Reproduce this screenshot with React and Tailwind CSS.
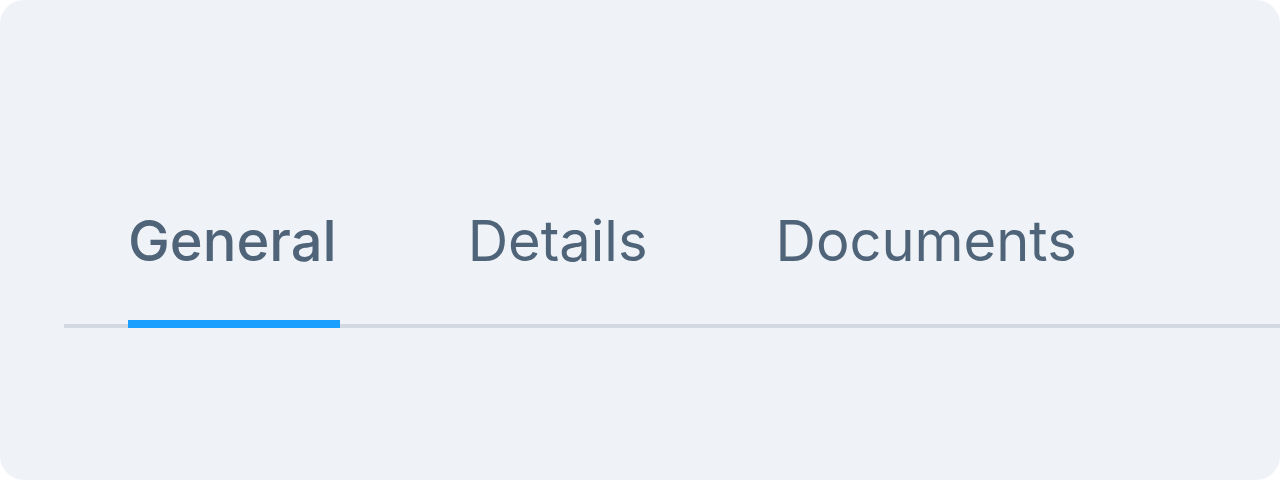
import React, { useState } from 'react';

const tabs = ['General', 'Details', 'Documents'];

const App = () => {
  const [active, setActive] = useState(0);

  return (
    <div className="w-[1280px] h-[480px] bg-white overflow-hidden" style={{ fontFamily: 'Inter, "Noto Sans", sans-serif' }}>
      <div className="h-full w-full rounded-[24px] bg-[#eff3f8] pt-[159px] pl-16 overflow-hidden">
        <div className="flex gap-32 pl-16 border-b-4 border-[#d2d9e1]">
          {tabs.map((tab, i) => (
            <button
              key={tab}
              onClick={() => setActive(i)}
              className={`relative pt-[40px] pb-[41px] text-[56px] leading-[84px] text-[#4f6479] ${i === active ? 'font-medium pr-[3px]' : 'font-normal'}`}
            >
              {tab}
              {i === active && (
                <span className="absolute left-0 right-0 -bottom-[4px] h-2 bg-[#1a9fff]" />
              )}
            </button>
          ))}
        </div>
      </div>
    </div>
  );
};

export default App;
